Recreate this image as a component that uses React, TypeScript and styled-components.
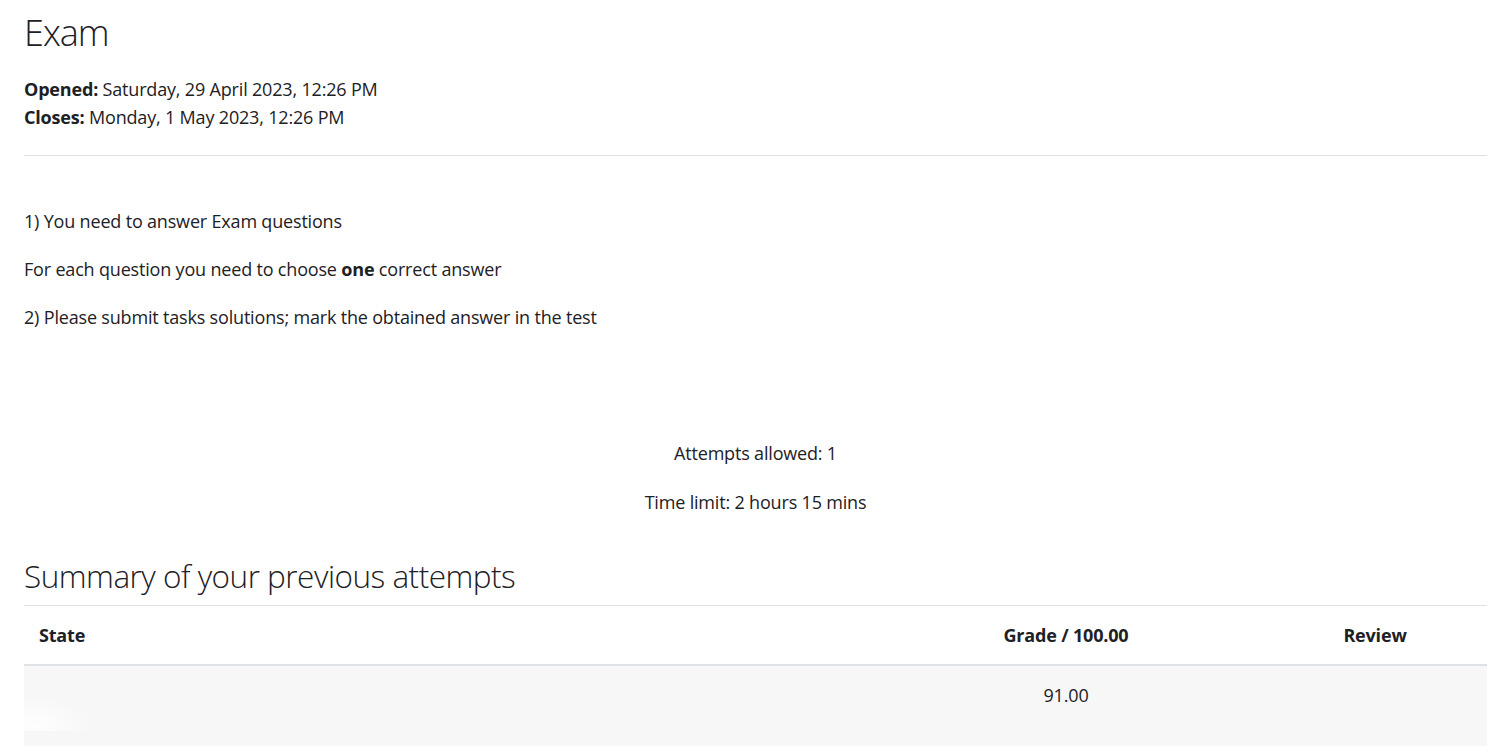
import React from "react";
import styled, { createGlobalStyle } from "styled-components";

const Global = createGlobalStyle`
  html, body { margin: 0; padding: 0; background: #fff; }
  body {
    font-family: "Open Sans", "Noto Sans", "Liberation Sans", sans-serif;
    color: #1d2125;
    font-size: 18px;
    letter-spacing: -0.18px;
    line-height: 28px;
  }
  * { box-sizing: border-box; }
`;

const Page = styled.main`
  padding: 10px 23px 0 24px;
`;

const Title = styled.h2`
  margin: 0 0 20px;
  font-size: 36px;
  letter-spacing: -1px;
  font-weight: 300;
  line-height: 45px;
`;

const Dates = styled.div`
  display: flex;
  flex-direction: column;
`;

const DateLine = styled.div`
  b { font-weight: 700; }
`;

const Rule = styled.hr`
  margin: 24px 0 0;
  border: 0;
  border-top: 1px solid #dee2e6;
`;

const Intro = styled.section`
  padding-top: 51px;
`;

const Para = styled.p`
  margin: 0 0 20px;
  b { font-weight: 700; }
`;

const Info = styled.div`
  margin-top: 108px;
  display: flex;
  flex-direction: column;
  align-items: center;
  gap: 21px;
`;

const SubTitle = styled.h3`
  margin: 40px 0 10px;
  font-size: 31.5px;
  letter-spacing: -0.5px;
  font-weight: 300;
  line-height: 39px;
`;

const Table = styled.table`
  width: 100%;
  border-collapse: collapse;
  table-layout: fixed;
`;

const Col = styled.col<{ $w: number }>`
  width: ${(p) => p.$w}px;
`;

const Th = styled.th<{ $align?: string }>`
  padding: 15px;
  text-align: ${(p) => p.$align || "left"};
  font-weight: 700;
  border-top: 1px solid #dee2e6;
  border-bottom: 2px solid #dee2e6;
  vertical-align: bottom;
`;

const Row = styled.tr`
  background: #f7f7f7;
`;

const Td = styled.td<{ $align?: string }>`
  padding: 15px;
  text-align: ${(p) => p.$align || "left"};
  vertical-align: top;
`;

const Redacted = styled.div`
  height: 50px;
  margin: 0 0 0 -15px;
  background: radial-gradient(ellipse 60px 30px at 10px 45px, rgba(255,255,255,0.9), rgba(255,255,255,0));
`;

export default function App() {
  return (
    <>
      <Global />
      <Page>
        <Title>Exam</Title>
        <Dates>
          <DateLine>
            <b>Opened:</b> Saturday, 29 April 2023, 12:26 PM
          </DateLine>
          <DateLine>
            <b>Closes:</b> Monday, 1 May 2023, 12:26 PM
          </DateLine>
        </Dates>
        <Rule />
        <Intro>
          <Para>1) You need to answer Exam questions</Para>
          <Para>
            For each question you need to choose <b>one</b> correct answer
          </Para>
          <Para>2) Please submit tasks solutions; mark the obtained answer in the test</Para>
        </Intro>
        <Info>
          <div>Attempts allowed: 1</div>
          <div>Time limit: 2 hours 15 mins</div>
        </Info>
        <SubTitle>Summary of your previous attempts</SubTitle>
        <Table>
          <colgroup>
            <Col $w={845} />
            <Col $w={394} />
            <Col $w={224} />
          </colgroup>
          <thead>
            <tr>
              <Th>State</Th>
              <Th $align="center">Grade / 100.00</Th>
              <Th $align="center">Review</Th>
            </tr>
          </thead>
          <tbody>
            <Row>
              <Td>
                <Redacted />
              </Td>
              <Td $align="center">91.00</Td>
              <Td $align="center"></Td>
            </Row>
          </tbody>
        </Table>
      </Page>
    </>
  );
}
